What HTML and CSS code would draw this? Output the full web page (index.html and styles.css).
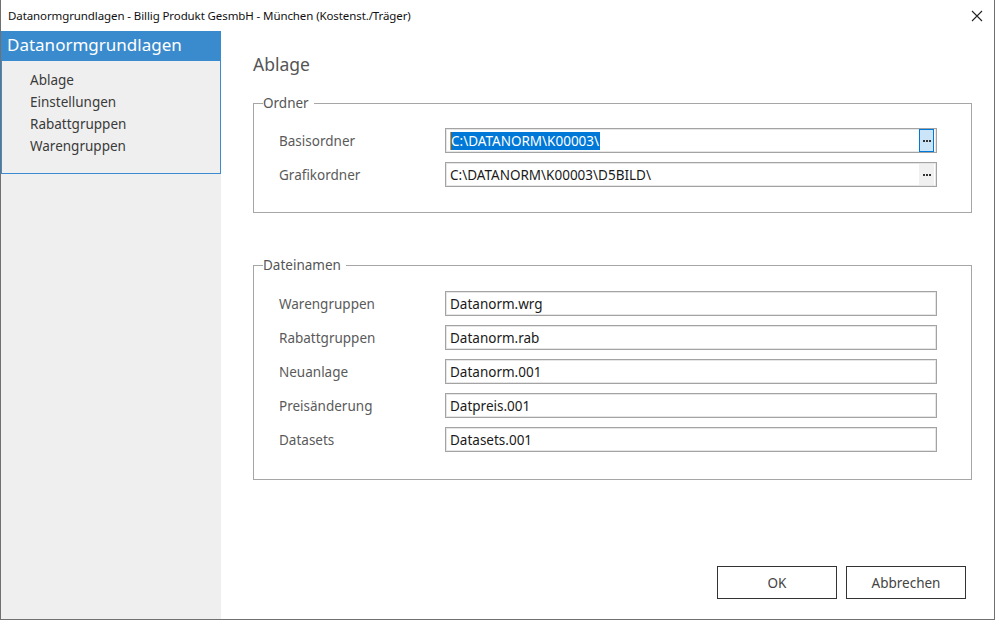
FILE: index.html
```html
<!DOCTYPE html>
<html lang="de">
<head>
<meta charset="utf-8">
<title>Datanormgrundlagen</title>
<link rel="stylesheet" href="styles.css">
</head>
<body>
<div class="window">
  <div class="titlebar">
    <span class="title">Datanormgrundlagen - Billig Produkt GesmbH - München (Kostenst./Träger)</span>
    <span class="close">
      <svg width="12" height="12" viewBox="0 0 12 12"><path d="M1 1 L11 11 M11 1 L1 11" stroke="#222" stroke-width="1.1" fill="none"/></svg>
    </span>
  </div>
  <div class="body">
    <aside class="sidebar">
      <div class="navbox">
        <div class="navhead">Datanormgrundlagen</div>
        <ul class="navlist">
          <li>Ablage</li>
          <li>Einstellungen</li>
          <li>Rabattgruppen</li>
          <li>Warengruppen</li>
        </ul>
      </div>
    </aside>
    <main class="main">
      <h1 class="heading">Ablage</h1>
      <fieldset class="group group-ordner">
        <legend>Ordner</legend>
        <div class="row">
          <label>Basisordner</label>
          <div class="field">
            <span class="value"><span class="caret"></span><span class="sel">C:\DATANORM\K00003\</span></span>
            <span class="browse focused"><svg width="8" height="2" viewBox="0 0 8 2"><rect x="0" y="0" width="2" height="2" fill="#333"/><rect x="3" y="0" width="2" height="2" fill="#333"/><rect x="6" y="0" width="2" height="2" fill="#333"/></svg></span>
          </div>
        </div>
        <div class="row">
          <label>Grafikordner</label>
          <div class="field">
            <span class="value">C:\DATANORM\K00003\D5BILD\</span>
            <span class="browse"><svg width="8" height="2" viewBox="0 0 8 2"><rect x="0" y="0" width="2" height="2" fill="#333"/><rect x="3" y="0" width="2" height="2" fill="#333"/><rect x="6" y="0" width="2" height="2" fill="#333"/></svg></span>
          </div>
        </div>
      </fieldset>
      <fieldset class="group group-dateien">
        <legend>Dateinamen</legend>
        <div class="row"><label>Warengruppen</label><div class="field"><span class="value">Datanorm.wrg</span></div></div>
        <div class="row"><label>Rabattgruppen</label><div class="field"><span class="value">Datanorm.rab</span></div></div>
        <div class="row"><label>Neuanlage</label><div class="field"><span class="value">Datanorm.001</span></div></div>
        <div class="row"><label>Preisänderung</label><div class="field"><span class="value">Datpreis.001</span></div></div>
        <div class="row"><label>Datasets</label><div class="field"><span class="value">Datasets.001</span></div></div>
      </fieldset>
      <div class="buttons">
        <button class="btn">OK</button>
        <button class="btn">Abbrechen</button>
      </div>
    </main>
  </div>
</div>
</body>
</html>
```
FILE: styles.css
```css
* { box-sizing: border-box; }
html, body { margin: 0; padding: 0; background: #fff; }
body { font-family: "Noto Sans", "Open Sans", sans-serif; color: #333; }

.window {
  width: 995px;
  height: 620px;
  border-left: 1px solid #707070;
  border-right: 1px solid #707070;
  border-bottom: 1px solid #707070;
  display: flex;
  flex-direction: column;
  background: #fff;
}

.titlebar {
  height: 31px;
  flex: none;
  display: flex;
  align-items: center;
  justify-content: space-between;
  padding-left: 7px;
  padding-right: 11px;
}
.title { font-size: 11.5px; color: #111; letter-spacing: -0.1px; }
.close { display: flex; width: 12px; height: 12px; }

.body { flex: 1; display: flex; min-height: 0; }

.sidebar {
  width: 220px;
  flex: none;
  background: #efefef;
}
.navbox {
  border: 1px solid #3a8bd0;
  border-top: none;
  height: 143px;
}
.navhead {
  height: 30px;
  background: #3a8bcd;
  color: #fff;
  font-size: 17px;
  line-height: 28px;
  padding-left: 6px;
  margin: 0 -1px;
}
.navlist {
  list-style: none;
  margin: 0;
  padding: 8px 0 0 28px;
}
.navlist li {
  font-size: 13.5px;
  line-height: 22px;
  color: #3a3a3a;
}

.main {
  flex: 1;
  display: flex;
  flex-direction: column;
  padding: 20px 22px 20px 32px;
}
.heading {
  margin: 0;
  font-size: 17.5px;
  font-weight: normal;
  color: #555;
  line-height: 26px;
}

.group {
  margin: 17px 0 0 0;
  border: 1px solid #a6a6a6;
  padding: 16px 34px 25px 25px;
}
.group-dateien { margin-top: 43px; padding-top: 17px; padding-bottom: 27px; }
.group legend {
  font-size: 13.5px;
  color: #555;
  padding: 0 5px 0 0;
  margin-left: -16px;
  line-height: 18px;
}

.row {
  display: flex;
  align-items: center;
  height: 25px;
  margin-top: 9px;
}
.row:first-of-type { margin-top: 0; }
.row label {
  width: 166px;
  flex: none;
  font-size: 13.5px;
  color: #5a5a5a;
}
.field {
  flex: 1;
  height: 25px;
  border: 1px solid #a3a3a3;
  box-shadow: inset 0 0 0 1px #e6e6e6;
  display: flex;
  align-items: center;
  padding: 2px 2px 2px 4px;
}
.value {
  flex: 1;
  font-size: 13.5px;
  color: #1a1a1a;
  display: flex;
  align-items: center;
  height: 19px;
}
.caret { width: 1px; height: 18px; background: #ff8a00; }
.sel {
  background: #0078d7;
  color: #fff;
  height: 18px;
  line-height: 18px;
  padding-right: 1px;
}
.browse {
  width: 15px;
  height: 21px;
  flex: none;
  background: #f0f0f0;
  display: flex;
  align-items: center;
  justify-content: center;
}
.browse svg { display: block; }
.browse.focused {
  background: #cce4f7;
  border: 1px solid #0078d7;
  height: 23px;
}

.buttons {
  margin-top: auto;
  display: flex;
  justify-content: flex-end;
  gap: 9px;
  padding-right: 6px;
}
.btn {
  width: 120px;
  height: 33px;
  background: #fff;
  border: 1px solid #333;
  font-family: "Noto Sans", "Open Sans", sans-serif;
  font-size: 13.5px;
  color: #444;
  padding: 0;
}
```
